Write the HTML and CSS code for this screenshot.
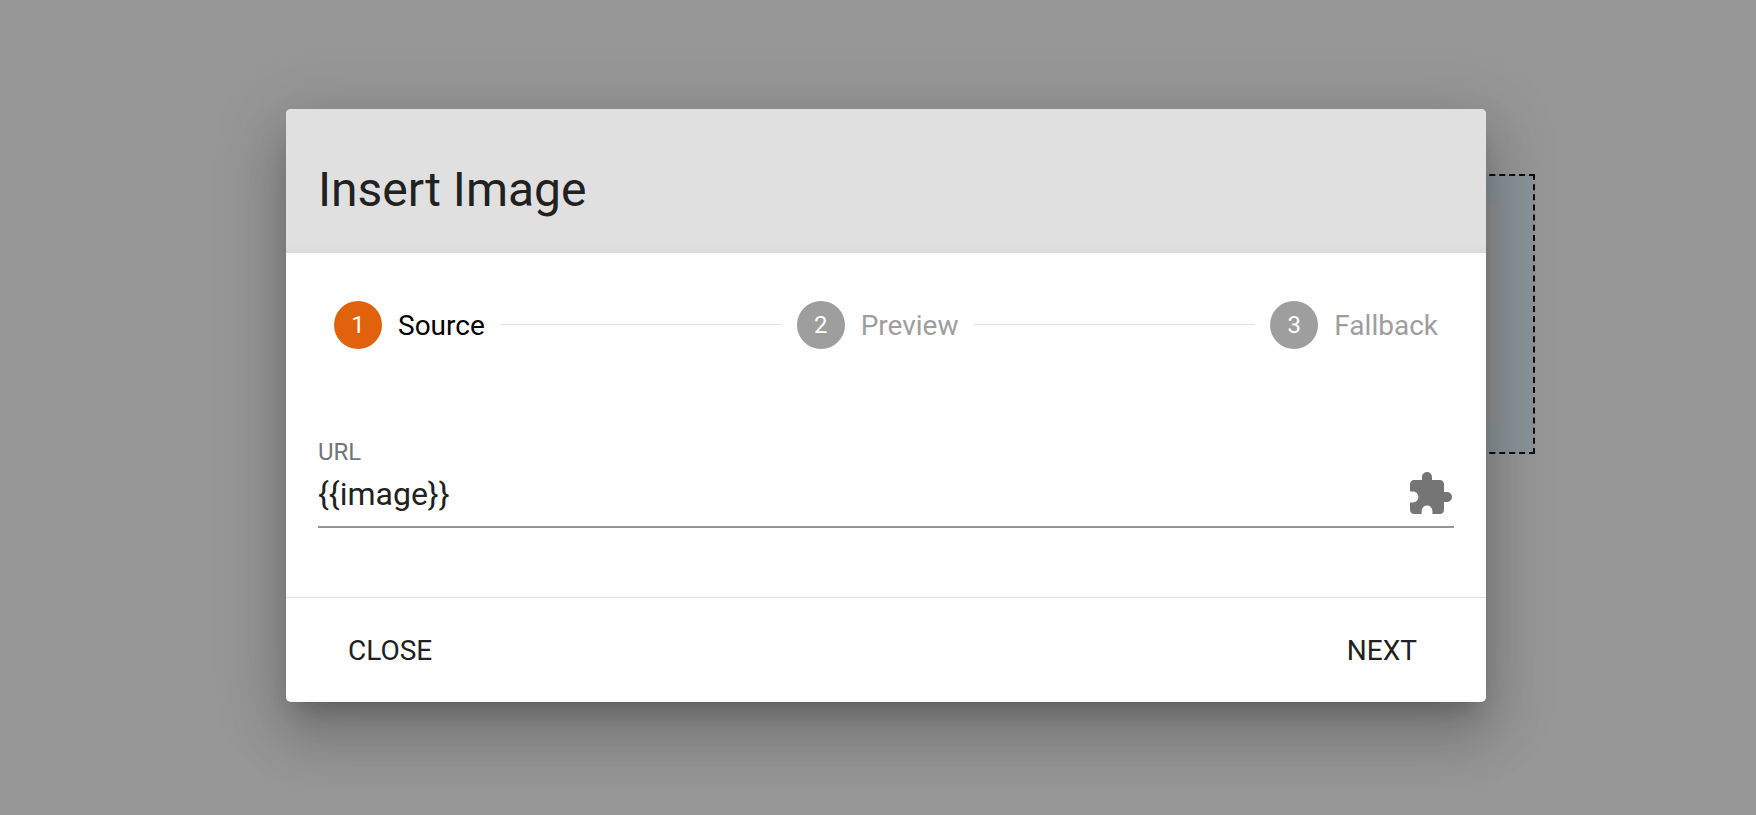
FILE: index.html
```html
<!DOCTYPE html>
<html lang="en">
<head>
  <meta charset="UTF-8">
  <meta name="viewport" content="width=device-width, initial-scale=1.0">
  <title>Insert Image</title>
  <link rel="stylesheet" href="styles.css">
</head>
<body>
  <!-- element selected on the page, dimmed behind the dialog -->
  <div class="selected-block">
    <div class="selected-inner"></div>
  </div>

  <div class="overlay">
    <div class="dialog">
      <header class="dialog-header">
        <h1>Insert Image</h1>
      </header>

      <div class="stepper">
        <div class="step active">
          <span class="step-num">1</span>
          <span class="step-label">Source</span>
        </div>
        <div class="step-line"></div>
        <div class="step">
          <span class="step-num">2</span>
          <span class="step-label">Preview</span>
        </div>
        <div class="step-line"></div>
        <div class="step">
          <span class="step-num">3</span>
          <span class="step-label">Fallback</span>
        </div>
      </div>

      <div class="field">
        <label class="field-label" for="url">URL</label>
        <div class="field-row">
          <input class="field-input" id="url" type="text" value="{{image}}">
          <svg class="field-icon" viewBox="0 0 24 24" width="48" height="48" aria-hidden="true">
            <path d="M20.5 11H19V7c0-1.1-.9-2-2-2h-4V3.5C13 2.12 11.88 1 10.5 1S8 2.12 8 3.5V5H4c-1.1 0-1.99.9-1.99 2v3.8H3.5c1.49 0 2.7 1.21 2.7 2.7s-1.21 2.7-2.7 2.7H2V20c0 1.1.9 2 2 2h3.8v-1.5c0-1.49 1.21-2.7 2.7-2.7 1.49 0 2.7 1.21 2.7 2.7V22H17c1.1 0 2-.9 2-2v-4h1.5c1.38 0 2.5-1.12 2.5-2.5S21.88 11 20.5 11z"/>
          </svg>
        </div>
      </div>

      <footer class="dialog-footer">
        <button type="button" class="button">CLOSE</button>
        <button type="button" class="button">NEXT</button>
      </footer>
    </div>
  </div>
</body>
</html>
```

FILE: styles.css
```css
* {
  box-sizing: border-box;
}

body {
  margin: 0;
  height: 815px;
  overflow: hidden;
  background-color: #979797;
  font-family: Roboto, sans-serif;
}

.selected-block {
  position: absolute;
  left: 1400px;
  top: 174px;
  width: 135px;
  height: 280px;
  border: 2px dashed #0c0c0c;
  background-color: #8b9498;
}

.selected-inner {
  position: absolute;
  left: 0;
  top: 28px;
  width: 95px;
  height: 220px;
  background-color: #939492;
}

.overlay {
  position: absolute;
  top: 0;
  left: 0;
  width: 100%;
  height: 100%;
  padding: 109px 0 0 286px;
}

.overlay::before {
  content: '';
  position: absolute;
  left: 286px;
  top: 109px;
  width: 1200px;
  height: 593px;
  border-radius: 5px;
  box-shadow: 0 16px 22px -10px rgba(0, 0, 0, 0.2), 0 36px 56px 4px rgba(0, 0, 0, 0.14), 0 14px 68px 12px rgba(0, 0, 0, 0.12);
}

.dialog {
  position: relative;
  width: 1200px;
  height: 593px;
  display: flex;
  flex-direction: column;
  background-color: white;
  border-radius: 5px;
  overflow: hidden;
}

.dialog-header {
  height: 144px;
  padding: 51px 32px 0;
  background: linear-gradient(#e0e0e0 135px, #dadada);
}

.dialog-header h1 {
  margin: 0;
  font-size: 48px;
  line-height: 60px;
  font-weight: 400;
  color: #212121;
}

.stepper {
  display: flex;
  align-items: center;
  padding: 48px 48px 0;
}

.step {
  display: flex;
  align-items: center;
  flex-shrink: 0;
}

.step-num {
  width: 48px;
  height: 48px;
  margin-right: 16px;
  border-radius: 50%;
  background-color: #9e9e9e;
  color: white;
  font-size: 24px;
  line-height: 48px;
  text-align: center;
}

.step-label {
  font-size: 28px;
  color: #9e9e9e;
}

.step.active .step-num {
  background-color: #e0620d;
}

.step.active .step-label {
  color: #000;
}

.step-line {
  flex: 1;
  height: 1px;
  margin: -1px 16px 0;
  background-color: #e0e0e0;
}

.field {
  margin: 89px 32px 0;
}

.field-label {
  display: block;
  font-size: 24px;
  line-height: 28px;
  color: #757575;
}

.field-row {
  display: flex;
  align-items: center;
  height: 62px;
  padding-bottom: 4px;
  border-bottom: 2px solid #949494;
}

.field-input {
  flex: 1;
  border: none;
  outline: none;
  padding: 0;
  font-family: Roboto, sans-serif;
  font-size: 32px;
  color: #212121;
  background: none;
}

.field-icon {
  fill: #757575;
}

.dialog-footer {
  display: flex;
  justify-content: space-between;
  margin-top: 69px;
  padding: 0 51px 0 44px;
  height: 105px;
  align-items: center;
  border-top: 1px solid #e0e0e0;
}

.button {
  border: none;
  background: none;
  padding: 8px;
  font-family: Roboto, sans-serif;
  font-size: 28px;
  color: #212121;
  margin: 0 10px;
}
```
